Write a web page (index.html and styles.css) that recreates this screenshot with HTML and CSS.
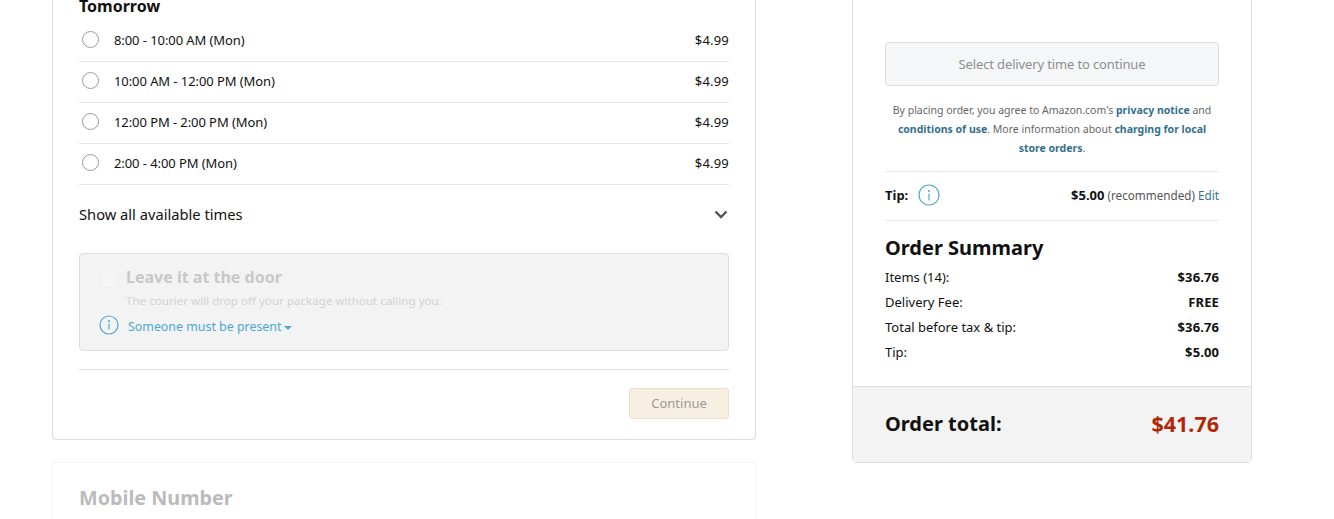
FILE: index.html
```html
<!DOCTYPE html>
<html lang="en">
<head>
    <meta charset="UTF-8">
    <title>Checkout</title>
    <link rel="stylesheet" href="styles.css">
</head>
<body>
    <div class="page">
        <div class="left-col">
            <div class="card delivery-card">
                <h3 class="day-title">Tomorrow</h3>
                <div class="slot">
                    <span class="radio"></span>
                    <span class="slot-time">8:00 - 10:00 AM (Mon)</span>
                    <span class="slot-price">$4.99</span>
                </div>
                <div class="slot">
                    <span class="radio"></span>
                    <span class="slot-time">10:00 AM - 12:00 PM (Mon)</span>
                    <span class="slot-price">$4.99</span>
                </div>
                <div class="slot">
                    <span class="radio"></span>
                    <span class="slot-time">12:00 PM - 2:00 PM (Mon)</span>
                    <span class="slot-price">$4.99</span>
                </div>
                <div class="slot">
                    <span class="radio"></span>
                    <span class="slot-time">2:00 - 4:00 PM (Mon)</span>
                    <span class="slot-price">$4.99</span>
                </div>
                <div class="show-all">
                    <span>Show all available times</span>
                    <svg class="chevron" width="14" height="9" viewBox="0 0 14 9"><path d="M1.500 1.500 7 7l5.500-5.500" fill="none" stroke="#555" stroke-width="2.400"/></svg>
                </div>
                <div class="door-box">
                    <div class="door-head">
                        <span class="checkbox"></span>
                        <span class="door-title">Leave it at the door</span>
                    </div>
                    <p class="door-text">The courier will drop off your package without calling you.</p>
                    <div class="door-link">
                        <svg class="door-icon" width="20" height="20" viewBox="0 0 20 20"><circle cx="10" cy="10" r="9" fill="none" stroke="#4ba9d1" stroke-width="1.200"/><circle cx="10" cy="6" r="1" fill="#4ba9d1"/><path d="M10 8.500v6" stroke="#4ba9d1" stroke-width="1.200"/></svg>
                        <span>Someone must be present</span>
                        <span class="caret"></span>
                    </div>
                </div>
                <div class="continue-row">
                    <button class="continue-btn">Continue</button>
                </div>
            </div>
            <div class="card mobile-card">
                <h2>Mobile Number</h2>
            </div>
        </div>
        <div class="right-col">
            <div class="summary-body">
                <button class="select-btn">Select delivery time to continue</button>
                <p class="legal">By placing order, you agree to Amazon.com's <b>privacy notice</b> and <b>conditions of use</b>. More information about <b>charging for local store orders</b>.</p>
                <div class="tip-row">
                    <span class="tip-label">Tip:</span>
                    <svg width="22" height="22" viewBox="0 0 22 22"><circle cx="11" cy="11" r="10" fill="none" stroke="#4ba9d1" stroke-width="1.200"/><circle cx="11" cy="7" r="1" fill="#4ba9d1"/><path d="M11 9.500v7" stroke="#4ba9d1" stroke-width="1.200"/></svg>
                    <span class="tip-value"><b>$5.00</b> <span class="muted">(recommended)</span> <span class="edit">Edit</span></span>
                </div>
                <h2 class="summary-title">Order Summary</h2>
                <div class="line"><span>Items (14):</span><b>$36.76</b></div>
                <div class="line"><span>Delivery Fee:</span><b>FREE</b></div>
                <div class="line"><span>Total before tax &amp; tip:</span><b>$36.76</b></div>
                <div class="line"><span>Tip:</span><b>$5.00</b></div>
            </div>
            <div class="total-bar">
                <span>Order total:</span>
                <span class="total-price">$41.76</span>
            </div>
        </div>
    </div>
</body>
</html>
```

FILE: styles.css
```css
* {
    margin: 0;
    padding: 0;
    box-sizing: border-box;
}

html, body {
    height: 519px;
    overflow: hidden;
}

body {
    font-family: "Noto Sans", Arial, sans-serif;
    font-size: 13px;
    color: #111111;
    background-color: #ffffff;
}

.page {
    display: flex;
    align-items: flex-start;
    gap: 96px;
    padding-left: 52px;
    margin-top: -20px;
}

.left-col {
    width: 704px;
    display: flex;
    flex-direction: column;
    gap: 22px;
}

.card {
    border: 1px solid #dddddd;
    border-radius: 4px;
    padding: 0 26px;
}

.delivery-card {
    height: 460px;
}

.day-title {
    font-size: 16px;
    font-weight: 700;
    line-height: 20px;
    margin-top: 15px;
    height: 25px;
}

.slot {
    display: flex;
    align-items: center;
    height: 41px;
    border-bottom: 1px solid #e7e7e7;
    padding-bottom: 2px;
}

.radio {
    width: 17px;
    height: 17px;
    border: 1px solid #999999;
    border-radius: 50%;
    margin: 0 0 1px 3px;
}

.slot-time {
    flex: 1;
    margin-left: 15px;
    letter-spacing: -0.08px;
}

.slot-price {
    letter-spacing: 0.2px;
}

.show-all {
    display: flex;
    justify-content: space-between;
    align-items: center;
    height: 61px;
    padding-bottom: 3px;
    font-size: 14.700px;
}

.chevron {
    margin-right: 1px;
}

.door-box {
    height: 98px;
    margin-top: 7px;
    padding: 12px 20px 0;
    background-color: #f3f3f3;
    border: 1px solid #dddddd;
    border-radius: 4px;
}

.door-head {
    display: flex;
    align-items: center;
    gap: 8px;
}

.checkbox {
    width: 18px;
    height: 18px;
    margin-top: 3px;
    background-color: #f5f5f5;
    border: 1px solid #eeeeee;
    border-radius: 3px;
}

.door-title {
    font-size: 16px;
    font-weight: 700;
    color: #c8c8c8;
}

.door-text {
    font-size: 11.600px;
    color: #d2d2d2;
    margin: 5px 0 0 26px;
}

.door-link {
    display: flex;
    align-items: center;
    gap: 9px;
    margin-top: 9px;
    font-size: 12.400px;
    color: #4ba9d1;
}

.door-icon {
    margin: -2px 0 0 -1px;
}

.caret {
    width: 0;
    height: 0;
    margin: 3px 0 0 -6px;
    border: 4px solid transparent;
    border-top: 4px solid #4ba9d1;
    border-bottom: 0;
}

.continue-row {
    display: flex;
    justify-content: flex-end;
    margin-top: 18px;
    padding-top: 18px;
    border-top: 1px solid #dddddd;
}

.continue-btn {
    width: 100px;
    height: 31px;
    padding-bottom: 2px;
    font: inherit;
    color: #9a9a9a;
    background-color: #f7f0e2;
    border: 1px solid #ecdfc6;
    border-radius: 3px;
}

.mobile-card {
    height: 120px;
    border-color: #f5f5f5;
    padding-top: 21px;
}

.mobile-card h2 {
    font-size: 19.800px;
    font-weight: 700;
    color: #bbbbbb;
}

.right-col {
    width: 400px;
    border: 1px solid #dddddd;
    border-radius: 0 0 4px 4px;
}

.summary-body {
    padding: 61px 32px 21px;
}

.select-btn {
    display: block;
    width: 100%;
    height: 44px;
    font: inherit;
    letter-spacing: -0.14px;
    color: #8f8f8f;
    background-color: #f5f6f7;
    border: 1px solid #dddddd;
    border-radius: 3px;
}

.legal {
    font-size: 10.500px;
    line-height: 19px;
    text-align: center;
    color: #666666;
    margin-top: 15px;
    padding-bottom: 13px;
    border-bottom: 1px solid #e7e7e7;
}

.legal b {
    color: #34708c;
}

.tip-row {
    display: flex;
    align-items: center;
    height: 49px;
    padding-bottom: 2px;
    border-bottom: 1px solid #e7e7e7;
}

.tip-label {
    font-weight: 700;
    margin-right: 10px;
}

.tip-value {
    margin-left: auto;
    font-size: 11.700px;
}

.tip-value b {
    font-size: 13px;
}

.muted {
    color: #555555;
}

.edit {
    color: #34708c;
}

.summary-title {
    font-size: 20px;
    font-weight: 700;
    line-height: 26px;
    margin-top: 14px;
    margin-bottom: 4px;
}

.line {
    display: flex;
    justify-content: space-between;
    align-items: center;
    height: 25px;
    padding-bottom: 2px;
}

.line b {
    letter-spacing: 0.1px;
}

.total-bar {
    display: flex;
    justify-content: space-between;
    align-items: center;
    height: 76px;
    padding: 0 32px 2px;
    font-size: 20px;
    font-weight: 700;
    background-color: #f3f3f3;
    border-top: 1px solid #dddddd;
}

.total-price {
    font-size: 21.500px;
    color: #b12704;
}
```
